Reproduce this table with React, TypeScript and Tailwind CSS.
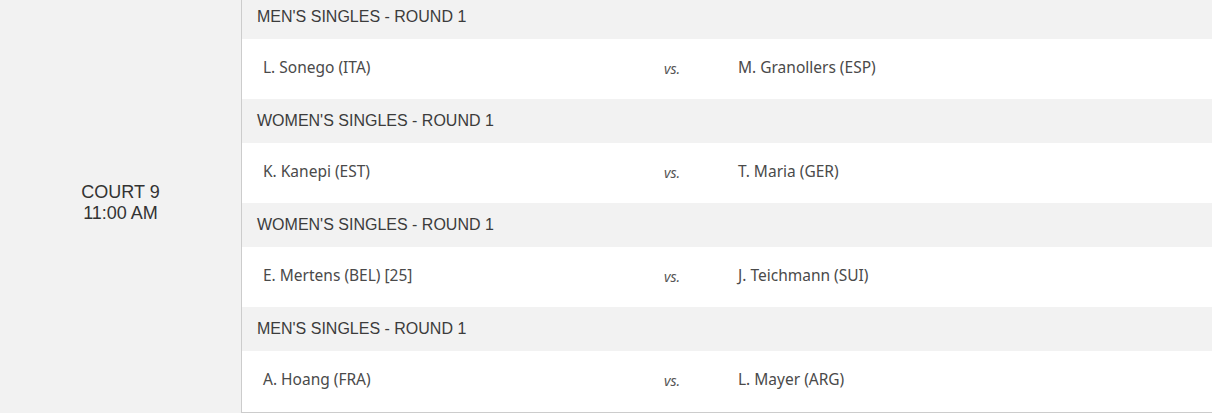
const matches = [
  { round: "MEN'S SINGLES - ROUND 1", home: 'L. Sonego (ITA)', away: 'M. Granollers (ESP)' },
  { round: "WOMEN'S SINGLES - ROUND 1", home: 'K. Kanepi (EST)', away: 'T. Maria (GER)' },
  { round: "WOMEN'S SINGLES - ROUND 1", home: 'E. Mertens (BEL) [25]', away: 'J. Teichmann (SUI)' },
  { round: "MEN'S SINGLES - ROUND 1", home: 'A. Hoang (FRA)', away: 'L. Mayer (ARG)' },
]

export default function App() {
  return (
    <div className="h-[413px] overflow-hidden bg-white">
      <div className="flex -mt-[5px]">
        {/* court + time */}
        <div className="w-[242px] shrink-0 flex flex-col items-center justify-center bg-[#f2f2f2] border-r border-[#cccccc] text-[18px] leading-[21px] text-[#333] font-['Liberation_Sans',Arial,sans-serif] pb-[2px] min-h-[418px]">
          <span>COURT 9</span>
          <span>11:00 AM</span>
        </div>

        {/* matches */}
        <div className="flex-1 border-b border-[#cccccc]">
          {matches.map((m, i) => (
            <div key={i}>
              <div className="h-[44px] flex items-center pl-[15px] bg-[#f2f2f2] text-[16px] text-[#3c3c3c] font-['Liberation_Sans',Arial,sans-serif]">
                {m.round}
              </div>
              <div className="h-[60px] flex items-center pb-[2px] bg-white text-[15.5px] text-[#4a4a4a] font-['Noto_Sans',sans-serif]">
                <span className="w-[422px] pl-[21px]">{m.home}</span>
                <span className="w-[74px] italic text-[14px] text-[#555]">vs.</span>
                <span>{m.away}</span>
              </div>
            </div>
          ))}
        </div>
      </div>
    </div>
  )
}
